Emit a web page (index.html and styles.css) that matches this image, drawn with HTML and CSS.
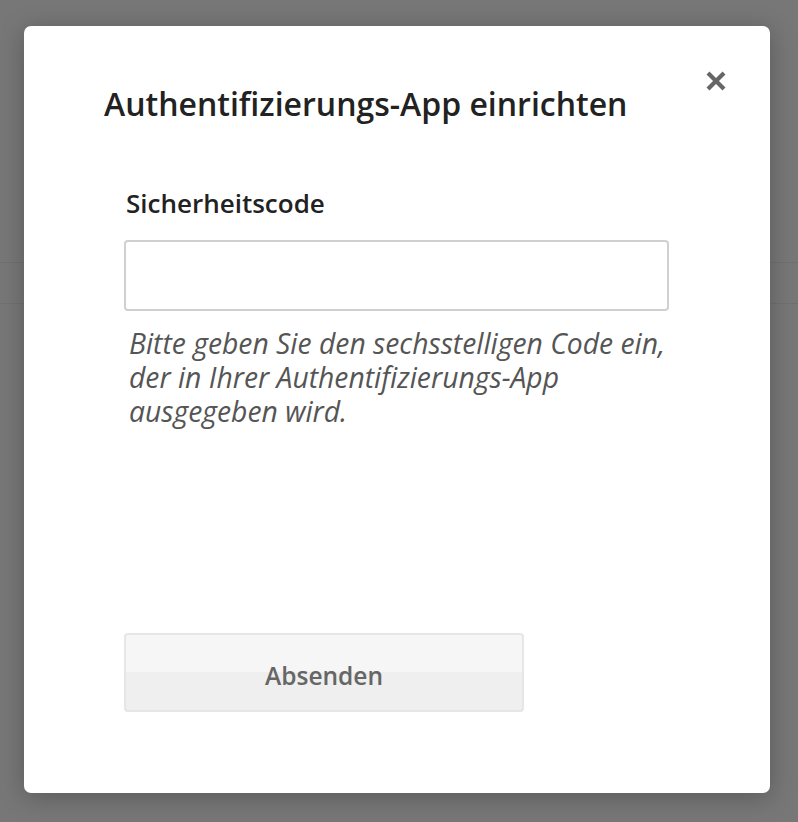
FILE: index.html
```html
<!DOCTYPE html>
<html lang="de">
<head>
<meta charset="utf-8">
<link rel="stylesheet" href="styles.css">
</head>
<body>
<div class="backdrop">
  <div class="backdrop-bar"></div>
</div>
<div class="modal">
  <button class="close" aria-label="Schließen">
    <svg width="22" height="22" viewBox="0 0 22 22"><path d="M3 3 L19 19 M19 3 L3 19" stroke="#666" stroke-width="4.2" stroke-linecap="butt"/></svg>
  </button>
  <h1 class="title">Authentifizierungs-App einrichten</h1>
  <form class="form">
    <label class="label" for="code">Sicherheitscode</label>
    <input class="input" id="code" type="text">
    <p class="help">Bitte geben Sie den sechsstelligen Code ein, der in Ihrer Authentifizierungs-App ausgegeben wird.</p>
    <button class="submit" type="button">Absenden</button>
  </form>
</div>
</body>
</html>
```
FILE: styles.css
```css
html, body {
  margin: 0;
  height: 100%;
}
body {
  background: #777777;
  font-family: "Open Sans", "Liberation Sans", sans-serif;
  position: relative;
  overflow: hidden;
}
.backdrop {
  padding-top: 262px;
}
.backdrop-bar {
  height: 40px;
  border-top: 1px solid #707070;
  border-bottom: 1px solid #707070;
}
.modal {
  position: absolute;
  left: 24px;
  top: 26px;
  width: 746px;
  height: 767px;
  box-sizing: border-box;
  background: #fff;
  border-radius: 7px;
  box-shadow: 0 4px 24px rgba(0,0,0,0.25);
  padding: 54px 80px 0 80px;
}
.close {
  position: absolute;
  right: 43px;
  top: 44px;
  border: 0;
  background: none;
  padding: 0;
  width: 22px;
  height: 22px;
  cursor: pointer;
}
.close svg { display: block; }
.title {
  margin: 0;
  font-size: 32px;
  font-weight: 600;
  color: #222;
  line-height: 47px;
}
.form {
  padding: 58px 0 0 20px;
  display: flex;
  flex-direction: column;
  align-items: flex-start;
}
.label {
  font-size: 26px;
  font-weight: 600;
  color: #222;
  line-height: 36px;
  padding-left: 2px;
}
.input {
  margin-top: 19px;
  width: 545px;
  height: 71px;
  box-sizing: border-box;
  border: 2px solid #d0d0d0;
  border-radius: 4px;
  font-size: 22px;
  font-family: inherit;
}
.help {
  margin: 15px 0 0 5px;
  width: 545px;
  font-size: 28.3px;
  font-style: italic;
  color: #555;
  line-height: 34px;
}
.submit {
  margin-top: 205px;
  width: 400px;
  height: 79px;
  padding-top: 6px;
  border: 2px solid #e6e6e6;
  border-radius: 4px;
  background: linear-gradient(#f6f6f6 0%, #f6f6f6 50%, #efefef 50%, #efefef 100%);
  font-family: inherit;
  font-size: 24.5px;
  font-weight: 600;
  color: #666;
}
```
